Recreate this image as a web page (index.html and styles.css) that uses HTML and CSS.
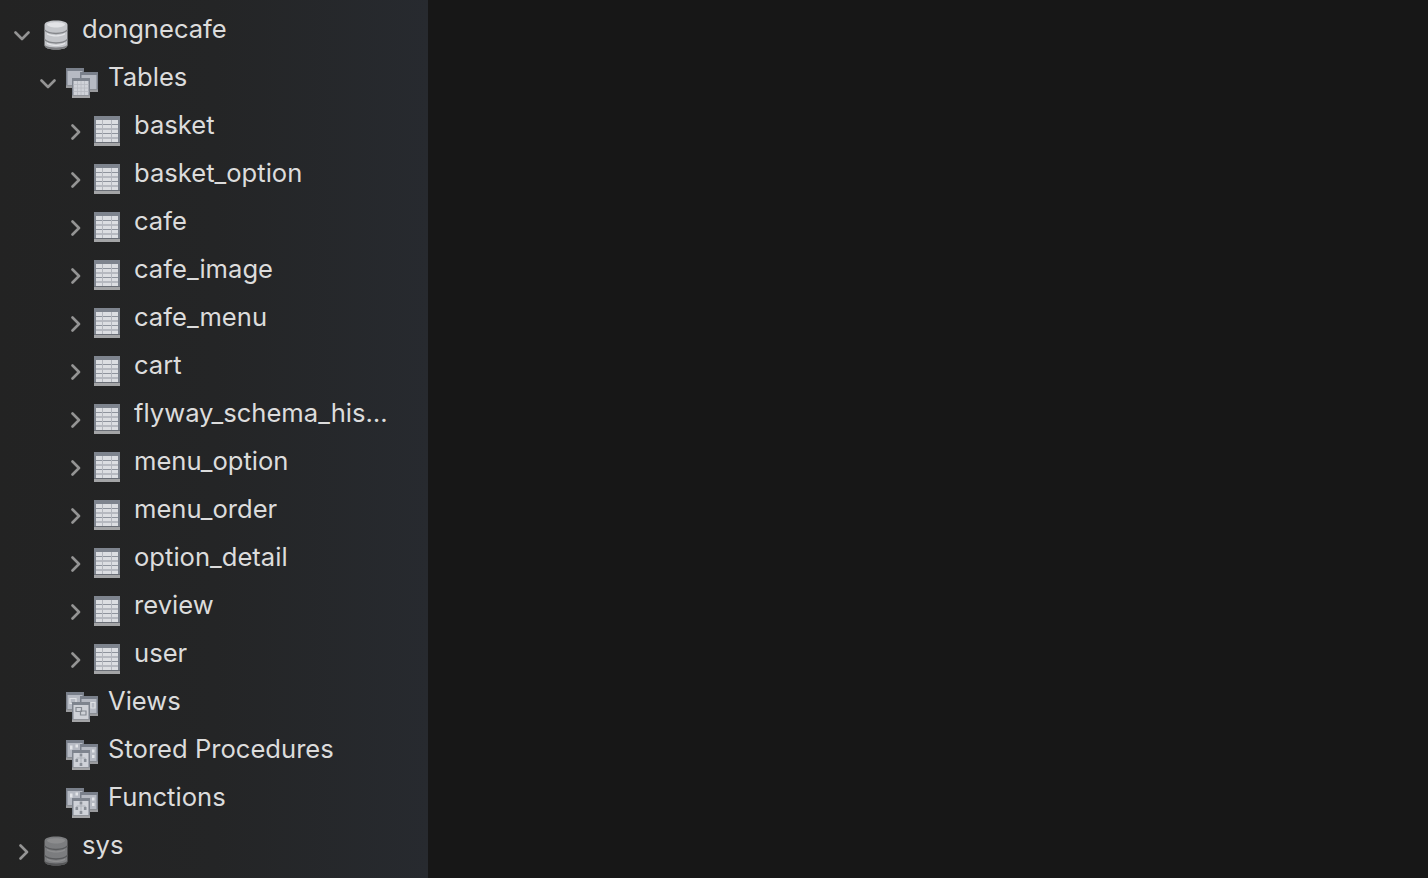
FILE: index.html
```html
<!DOCTYPE html>
<html lang="en">
<head>
<meta charset="utf-8">
<title>dongnecafe</title>
<link rel="stylesheet" href="styles.css">
</head>
<body>
<svg class="defs" width="0" height="0" aria-hidden="true">
  <defs>
    <symbol id="chev-down" viewBox="0 0 16 10"><path d="M1.500 1.500 8 8l6.500-6.500" fill="none" stroke="currentColor" stroke-width="2.600" stroke-linecap="round" stroke-linejoin="round"/></symbol>
    <symbol id="chev-right" viewBox="0 0 10 16"><path d="M1.500 1.500 8 8l-6.500 6.500" fill="none" stroke="currentColor" stroke-width="2.600" stroke-linecap="round" stroke-linejoin="round"/></symbol>
    <symbol id="db" viewBox="0 0 24 30">
      <path d="M.5 5C.5 2 5 .5 12 .5S23.500 2 23.500 5v20c0 3-4.500 4.500-11.500 4.500S.5 28 .5 25z" fill="#c4c6ca"/>
      <path d="M3 4.500C3 3 7 2.200 12 2.200S21 3 21 4.500 17 7.500 12 7.500 3 6 3 4.500z" fill="#e2e3e6"/>
      <path d="M3 13c3 1.600 6 2.200 9 2.200s6-.6 9-2.200v1.500c-3 1.400-6 2-9 2s-6-.6-9-2zM3 22.500c3 1.600 6 2.200 9 2.200s6-.6 9-2.200V24c-3 1.400-6 2-9 2s-6-.6-9-2z" fill="#e4e5e8"/>
      <path d="M.5 10c2.500 2.300 7 3.400 11.500 3.400S21 12.300 23.500 10M.5 19.500c2.500 2.300 7 3.400 11.500 3.400s9-1.100 11.500-3.400" fill="none" stroke="#85878b" stroke-width="1.500"/>
      <path d="M.5 25c0 3 4.500 4.500 11.500 4.500S23.500 28 23.500 25c-2.500 1.800-7 2.500-11.500 2.500S3 26.800.5 25z" fill="#7e7f82"/>
    </symbol>
    <symbol id="table" viewBox="0 0 26 30">
      <rect width="26" height="30" fill="#7e848e"/>
      <rect y="27" width="26" height="3" fill="#a3a4a6"/>
      <rect y="26" width="26" height="1" fill="#6a6e76"/>
      <rect x="2" y="4" width="22" height="22" fill="#dcdee2"/>
      <path d="M2 8.500h22M2 13h22M2 17.500h22M2 22h22" stroke="#8f949d" stroke-width="1.200"/>
      <path d="M8.500 4v22M17.500 4v22" stroke="#b4b7be" stroke-width="1"/>
    </symbol>
    <symbol id="win" viewBox="0 0 18 20">
      <rect width="18" height="20" fill="#7a808b"/>
      <rect y="17.500" width="18" height="2.500" fill="#9a9b9e"/>
      <rect x="1.500" y="3" width="15" height="14" fill="#b6bac3"/>
    </symbol>
    <symbol id="front" viewBox="0 0 18 20">
      <rect width="18" height="20" fill="#7e848e"/>
      <rect y="17.500" width="18" height="2.500" fill="#a3a4a6"/>
      <rect x="1.500" y="3" width="15" height="14" fill="#cfd2d8"/>
    </symbol>
    <symbol id="group-table" viewBox="0 0 32 30">
      <use href="#win" x="0" y="0" width="18" height="20"/>
      <use href="#win" x="14" y="4" width="18" height="20"/>
      <use href="#front" x="6" y="10" width="18" height="20"/>
      <path d="M7.500 16.500h15M7.500 20h15M7.500 23.500h15M11.500 13v14M15 13v14M18.500 13v14" stroke="#b7bac2" stroke-width=".8"/>
    </symbol>
    <symbol id="group-view" viewBox="0 0 32 30">
      <use href="#win" x="0" y="0" width="18" height="20"/>
      <use href="#win" x="14" y="4" width="18" height="20"/>
      <path d="M4 6.500h6v5H4zM25 10.500h4v5.500h-4z" fill="none" stroke="#dfe1e5" stroke-width="1.200"/>
      <use href="#front" x="6" y="10" width="18" height="20"/>
      <path d="M10 15.500h5.500v4H10zM14.500 19h5.500v4h-5.500z" fill="none" stroke="#868b93" stroke-width="1.200"/>
    </symbol>
    <symbol id="group-func" viewBox="0 0 32 30">
      <use href="#win" x="0" y="0" width="18" height="20"/>
      <use href="#win" x="14" y="4" width="18" height="20"/>
      <path d="M4 5.500h2.500v4H4zM9.500 4.500H12v3H9.500zM26 9.500h2.500v3H26zM26 15h2.500v3H26z" fill="#e3e5e9"/>
      <use href="#front" x="6" y="10" width="18" height="20"/>
      <path d="M13.700 13.500h2.600v3h-2.600zM9.500 19h2.600v3H9.500zM17.900 19h2.600v3h-2.600zM13.700 23h2.600v3h-2.600z" fill="#8a8f97"/>
      <path d="M15 16.500v6.500M10.800 19v-1H19.200v1" fill="none" stroke="#a5a9b1" stroke-width=".8"/>
    </symbol>
  </defs>
</svg>
<div class="app">
  <nav class="tree">
    <div class="row d0"><svg class="chev down"><use href="#chev-down"/></svg><svg class="ico ico-db"><use href="#db"/></svg><span class="label">dongnecafe</span></div>
    <div class="row d1"><svg class="chev down"><use href="#chev-down"/></svg><svg class="ico ico-group"><use href="#group-table"/></svg><span class="label">Tables</span></div>
    <div class="row d2"><svg class="chev right"><use href="#chev-right"/></svg><svg class="ico ico-table"><use href="#table"/></svg><span class="label">basket</span></div>
    <div class="row d2"><svg class="chev right"><use href="#chev-right"/></svg><svg class="ico ico-table"><use href="#table"/></svg><span class="label">basket_option</span></div>
    <div class="row d2"><svg class="chev right"><use href="#chev-right"/></svg><svg class="ico ico-table"><use href="#table"/></svg><span class="label">cafe</span></div>
    <div class="row d2"><svg class="chev right"><use href="#chev-right"/></svg><svg class="ico ico-table"><use href="#table"/></svg><span class="label">cafe_image</span></div>
    <div class="row d2"><svg class="chev right"><use href="#chev-right"/></svg><svg class="ico ico-table"><use href="#table"/></svg><span class="label">cafe_menu</span></div>
    <div class="row d2"><svg class="chev right"><use href="#chev-right"/></svg><svg class="ico ico-table"><use href="#table"/></svg><span class="label">cart</span></div>
    <div class="row d2"><svg class="chev right"><use href="#chev-right"/></svg><svg class="ico ico-table"><use href="#table"/></svg><span class="label">flyway_schema_history</span></div>
    <div class="row d2"><svg class="chev right"><use href="#chev-right"/></svg><svg class="ico ico-table"><use href="#table"/></svg><span class="label">menu_option</span></div>
    <div class="row d2"><svg class="chev right"><use href="#chev-right"/></svg><svg class="ico ico-table"><use href="#table"/></svg><span class="label">menu_order</span></div>
    <div class="row d2"><svg class="chev right"><use href="#chev-right"/></svg><svg class="ico ico-table"><use href="#table"/></svg><span class="label">option_detail</span></div>
    <div class="row d2"><svg class="chev right"><use href="#chev-right"/></svg><svg class="ico ico-table"><use href="#table"/></svg><span class="label">review</span></div>
    <div class="row d2"><svg class="chev right"><use href="#chev-right"/></svg><svg class="ico ico-table"><use href="#table"/></svg><span class="label">user</span></div>
    <div class="row d1"><span class="chev"></span><svg class="ico ico-group"><use href="#group-view"/></svg><span class="label">Views</span></div>
    <div class="row d1"><span class="chev"></span><svg class="ico ico-group"><use href="#group-func"/></svg><span class="label">Stored Procedures</span></div>
    <div class="row d1"><span class="chev"></span><svg class="ico ico-group"><use href="#group-func"/></svg><span class="label">Functions</span></div>
    <div class="row d0 off"><svg class="chev right"><use href="#chev-right"/></svg><svg class="ico ico-db"><use href="#db"/></svg><span class="label">sys</span></div>
  </nav>
  <main class="content"></main>
</div>
</body>
</html>
```
FILE: styles.css
```css
html, body {
  margin: 0;
  height: 100%;
  overflow: hidden;
}

.defs {
  display: block;
  height: 0;
}

.app {
  display: flex;
  height: 878px;
  background: #171717;
}

.tree {
  flex: 0 0 428px;
  box-sizing: border-box;
  padding-top: 5px;
  overflow: hidden;
  background: linear-gradient(90deg, #232323 0%, #242526 50%, #272a2f 100%);
  font-family: Inter, "Liberation Sans", sans-serif;
  font-size: 25.6px;
  color: #dcdcdc;
}

.content {
  flex: 1;
}

.row {
  display: flex;
  align-items: center;
  height: 48px;
  padding-right: 38px;
}

.d0 { padding-left: 14px; }
.d1 { padding-left: 40px; }
.d2 { padding-left: 71px; }

.chev {
  flex: none;
  color: #949494;
  margin-top: 13px;
}

.chev.down,
.d1 .chev {
  width: 16px;
  height: 10px;
}

.chev.right {
  width: 10px;
  height: 16px;
}

.d0 .chev.right {
  margin-left: 5px;
}

.d0 .chev.right + .ico {
  margin-left: 15px;
}

.ico {
  flex: none;
  margin-top: 12px;
}

.ico-db {
  width: 24px;
  height: 30px;
  margin-left: 14px;
  margin-right: 14px;
}

.ico-group {
  width: 32px;
  height: 30px;
  margin-left: 10px;
  margin-right: 10px;
}

.ico-table {
  width: 26px;
  height: 30px;
  margin-left: 13px;
  margin-right: 14px;
}

.off .ico {
  opacity: 0.55;
}

.label {
  min-width: 0;
  line-height: 48px;
  overflow: hidden;
  white-space: nowrap;
  text-overflow: ellipsis;
}
```
